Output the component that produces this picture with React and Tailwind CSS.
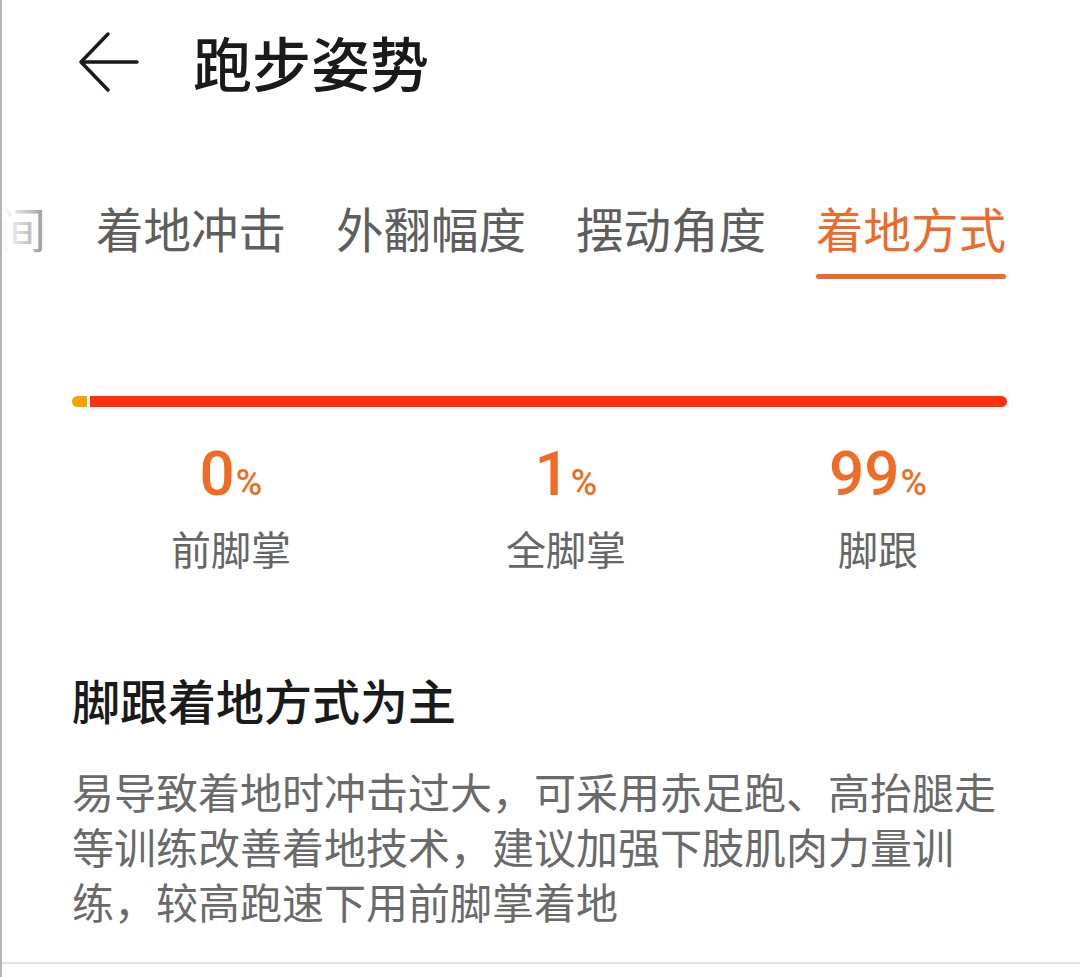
import React from 'react'

const cjk = { fontFamily: '"Noto Sans CJK SC", "Noto Sans", sans-serif' }
const num = { fontFamily: 'Roboto, "Noto Sans", sans-serif' }

const tabs = ['触地时间', '着地冲击', '外翻幅度', '摆动角度', '着地方式']

const stats = [
  { value: '0', label: '前脚掌', className: 'ml-[109px]' },
  { value: '1', label: '全脚掌', className: 'ml-[95px]' },
  { value: '99', label: '脚跟', className: 'ml-[72px]' },
]

const App = () => {
  return (
    <div className="w-[1080px] h-[977px] bg-white border-l-2 border-[#b4b4b4] overflow-hidden" style={cjk}>
      {/* Header */}
      <div className="flex items-center h-[122px] pl-[76px]">
        <svg width="62" height="62" viewBox="0 0 62 62" fill="none" className="mt-[2px]">
          <path d="M59 31H3M30 3L3 31L30 59" stroke="#1a1a1a" strokeWidth="3.5" strokeLinecap="round" strokeLinejoin="round" />
        </svg>
        <h1 className="ml-[53px] text-[59px] leading-[59px] font-medium text-[#1a1a1a]">跑步姿势</h1>
      </div>

      {/* Tabs */}
      <div className="relative mt-[82px] overflow-hidden">
        <div className="flex gap-[50px] ml-[-146px]">
          {tabs.map((t, i) => {
            const active = i === tabs.length - 1
            return (
              <div key={t} className="flex flex-col items-stretch shrink-0">
                <span className={`text-[47.5px] leading-[47px] whitespace-nowrap ${active ? 'text-[#ee6a2b]' : 'text-[#5e5e5e]'}`}>{t}</span>
                <div className={`mt-[23px] h-[5px] rounded-full ${active ? 'bg-[#ee6a2b]' : 'bg-transparent'}`} />
              </div>
            )
          })}
        </div>
        <div className="absolute left-0 top-0 h-[60px] w-[60px] bg-gradient-to-r from-white via-white/60 to-transparent" />
      </div>

      {/* Distribution bar */}
      <div className="flex mt-[117px] ml-[70px] w-[935px] h-[11px]">
        <div className="w-[15px] h-full bg-[#f5a300] rounded-l-full" />
        <div className="ml-[3px] flex-1 h-full bg-[#ff2f0c] rounded-r-full" />
      </div>

      {/* Stats */}
      <div className="flex mt-[36px]">
        {stats.map((s) => (
          <div key={s.label} className={`w-[240px] flex flex-col items-center ${s.className}`}>
            <div className="flex items-baseline text-[#f06c25]" style={num}>
              <span className="text-[62px] leading-[62px] font-medium">{s.value}</span>
              <span className="text-[36px] leading-[36px] font-medium ml-[1px]">%</span>
            </div>
            <div className="mt-[23px] text-[40px] leading-[40px] text-[#666666]">{s.label}</div>
          </div>
        ))}
      </div>

      {/* Summary */}
      <div className="pl-[70px] pr-[72px]">
        <h2 className="mt-[107px] text-[48px] leading-[48px] font-medium text-[#1a1a1a]">脚跟着地方式为主</h2>
        <p className="mt-[40px] text-[42px] leading-[55px] text-[#6a6a6a]">
          易导致着地时冲击过大，可采用赤足跑、高抬腿走等训练改善着地技术，建议加强下肢肌肉力量训练，较高跑速下用前脚掌着地
        </p>
      </div>

      <div className="mt-[34px] h-[2px] bg-[#e6e6e6]" />
    </div>
  )
}

export default App
